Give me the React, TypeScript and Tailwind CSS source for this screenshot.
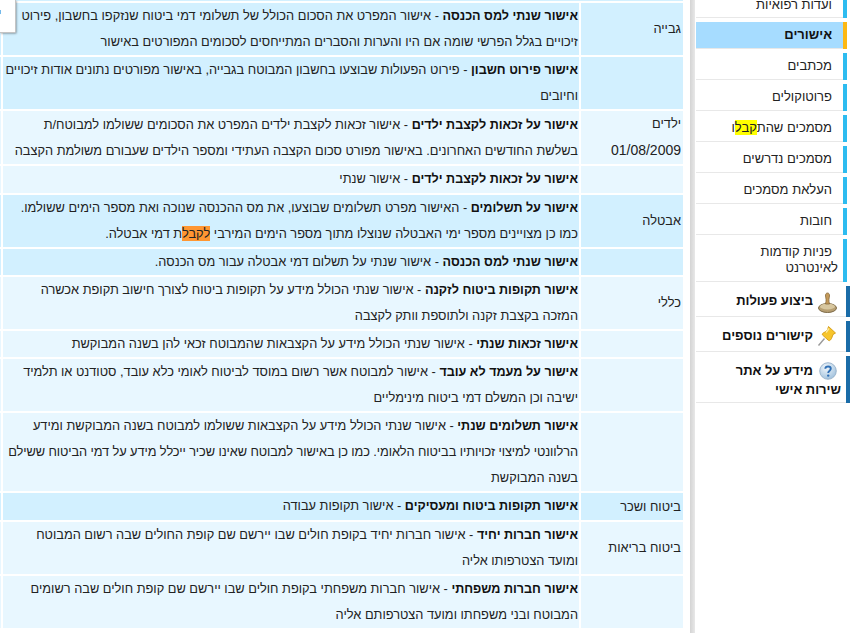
import React from "react";

type Row = { cat?: React.ReactNode; dark: boolean; title: string; lines: React.ReactNode[]; extra?: boolean };

const rows: Row[] = [
  { dark: true, cat: "גבייה", title: "אישור שנתי למס הכנסה", lines: ["אישור המפרט את הסכום הכולל של תשלומי דמי ביטוח שנזקפו בחשבון, פירוט", "זיכויים בגלל הפרשי שומה אם היו והערות והסברים המתייחסים לסכומים המפורטים באישור"] },
  { dark: true, title: "אישור פירוט חשבון", lines: ["פירוט הפעולות שבוצעו בחשבון המבוטח בגבייה, באישור מפורטים נתונים אודות זיכויים", "וחיובים"] },
  { dark: false, cat: <>ילדים<br /><span className="text-[14px]">01/08/2009</span></>, title: "אישור על זכאות לקצבת ילדים", lines: ["אישור זכאות לקצבת ילדים המפרט את הסכומים ששולמו למבוטח/ת", "בשלשת החודשים האחרונים. באישור מפורט סכום הקצבה העתידי ומספר הילדים שעבורם משולמת הקצבה"] },
  { dark: false, extra: true, title: "אישור על זכאות לקצבת ילדים", lines: ["אישור שנתי"] },
  { dark: true, cat: "אבטלה", title: "אישור על תשלומים", lines: ["האישור מפרט תשלומים שבוצעו, את מס ההכנסה שנוכה ואת מספר הימים ששולמו.", <>כמו כן מצויינים מספר ימי האבטלה שנוצלו מתוך מספר הימים המירבי <span className="bg-[#ff9632]">לקבל</span>ת דמי אבטלה.</>] },
  { dark: true, title: "אישור שנתי למס הכנסה", lines: ["אישור שנתי על תשלום דמי אבטלה עבור מס הכנסה."] },
  { dark: false, cat: "כללי", title: "אישור תקופות ביטוח לזקנה", lines: ["אישור שנתי הכולל מידע על תקופות ביטוח לצורך חישוב תקופת אכשרה", "המזכה בקצבת זקנה ולתוספת וותק לקצבה"] },
  { dark: false, title: "אישור זכאות שנתי", lines: ["אישור שנתי הכולל מידע על הקצבאות שהמבוטח זכאי להן בשנה המבוקשת"] },
  { dark: false, title: "אישור על מעמד לא עובד", lines: ["אישור למבוטח אשר רשום במוסד לביטוח לאומי כלא עובד, סטודנט או תלמיד", "ישיבה וכן המשלם דמי ביטוח מינימליים"] },
  { dark: false, title: "אישור תשלומים שנתי", lines: ["אישור שנתי הכולל מידע על הקצבאות ששולמו למבוטח בשנה המבוקשת ומידע", <span className="tracking-[-0.09px]">הרלוונטי למיצוי זכויותיו בביטוח הלאומי. כמו כן באישור למבוטח שאינו שכיר ייכלל מידע על דמי הביטוח ששילם</span>, "בשנה המבוקשת"] },
  { dark: true, extra: true, cat: "ביטוח ושכר", title: "אישור תקופות ביטוח ומעסיקים", lines: ["אישור תקופות עבודה"] },
  { dark: false, cat: "ביטוח בריאות", title: "אישור חברות יחיד", lines: ["אישור חברות יחיד בקופת חולים שבו יירשם שם קופת החולים שבה רשום המבוטח", "ומועד הצטרפותו אליה"] },
  { dark: false, title: "אישור חברות משפחתי", lines: ["אישור חברות משפחתי בקופת חולים שבו יירשם שם קופת חולים שבה רשומים", "המבוטח ובני משפחתו ומועד הצטרפותם אליה"] },
];

function SubItem({ children, active, h = "h-[27px]", mb = "mb-1" }: { children: React.ReactNode; active?: boolean; h?: string; mb?: string }) {
  return (
    <div className={`${h} ${mb} flex w-[151px] shrink-0`}>
      <div className={`flex-1 min-w-0 border-b border-[#e8e8e8] pr-[11px] text-right leading-[26px] ${active ? "bg-[#a6dcff] font-bold text-[#111]" : "bg-white text-[#222]"}`}>
        {children}
      </div>
      <div className={`w-1 ${active ? "bg-[#fdb813]" : "bg-[#2dbcf0]"}`} />
    </div>
  );
}

function MainItem({ icon, children, h = "h-[31px]", mb = "mb-1" }: { icon: React.ReactNode; children: React.ReactNode; h?: string; mb?: string }) {
  return (
    <div className={`${h} ${mb} flex w-[154px] shrink-0`}>
      <div className="relative flex-1 border-b border-[#e8e8e8] pr-[33px] pt-[2px] text-right font-bold leading-[26px] text-[#111]">
        <span className="absolute right-[9px] top-[4px]">{icon}</span>
        {children}
      </div>
      <div className="w-1 bg-[#1a6ca8]" />
    </div>
  );
}

function Stamp() {
  return (
    <svg width="20" height="24" viewBox="0 0 20 24">
      <ellipse cx="10.5" cy="18" rx="9" ry="4.5" fill="#b79f72" stroke="#7d6a47" />
      <ellipse cx="10.5" cy="16.5" rx="7.5" ry="3" fill="#d8c79f" />
      <path d="M8.5 14 C9.5 10 9 9 8.5 6 C8 2 13 2 12.5 6 C12 9 11.5 10 12.5 14 Z" fill="#c49a5a" stroke="#86683a" strokeWidth="0.8" />
    </svg>
  );
}

function Pin() {
  return (
    <svg width="20" height="22" viewBox="0 0 20 22">
      <path d="M1.5 20.5 L7.5 13.5" stroke="#9a9a9a" strokeWidth="1.4" />
      <path d="M11.5 1.5 L18.5 8 L16 9.5 L14.5 13.5 C13 16 12 16 11 15 L5.5 10 C5 9 5.5 8 8 7 L10.5 5 Z" fill="#f7c52c" stroke="#d49a12" strokeWidth="0.9" />
      <path d="M12 3.5 L9 7.5" stroke="#fdeaa0" strokeWidth="1.4" />
    </svg>
  );
}

function Question() {
  return (
    <svg width="18" height="18" viewBox="0 0 18 18" className="mt-[2px]">
      <defs>
        <radialGradient id="qg" cx="40%" cy="30%" r="75%">
          <stop offset="0%" stopColor="#f2f7fb" />
          <stop offset="100%" stopColor="#9dbfdc" />
        </radialGradient>
      </defs>
      <circle cx="9" cy="9" r="8.3" fill="url(#qg)" stroke="#8fa9c4" strokeWidth="0.8" />
      <path d="M6.3 6.8 C6.5 3.8 11.8 3.8 11.8 6.8 C11.8 8.8 9.2 8.6 9.2 11" fill="none" stroke="#2f6fb5" strokeWidth="1.9" />
      <circle cx="9.2" cy="13.6" r="1.2" fill="#2f6fb5" />
    </svg>
  );
}

export default function App() {
  return (
    <div className="relative flex h-[633px] w-[851px] overflow-hidden bg-white text-[13px] text-[#222]" style={{ fontFamily: '"Liberation Sans", Arial, sans-serif' }}>
      <div className="absolute left-0 top-0 z-10 h-[33px] w-[16px] overflow-hidden rounded-br-[2px] border-b border-r border-[#c4c4c4] bg-white shadow-[1px_1px_2px_rgba(0,0,0,0.3)]">
        <span className="absolute -left-[2px] top-[4px]">י</span>
      </div>

      <div className="w-[690px] shrink-0">
        <table dir="ltr" className="-ml-[2px] -mt-[2px] w-[687px] table-fixed border-separate border-spacing-[2px]">
          <colgroup>
            <col className="w-[1px]" />
            <col className="w-[576px]" />
            <col className="w-[102px]" />
          </colgroup>
          <tbody>
            <tr className="h-[1px]">
              <td className="bg-[#d2f0ff] p-0" colSpan={3} />
            </tr>
            {rows.map((r, i) => {
              const bg = r.dark ? "bg-[#d2f0ff]" : "bg-[#e8f7ff]";
              return (
                <tr key={i}>
                  <td className={`${bg} p-0`} />
                  <td dir="rtl" className={`${bg} ${r.extra ? "pb-[1px]" : "pb-0"} overflow-hidden whitespace-nowrap pl-0 pr-[1px] pt-0 text-right align-middle text-[12.8px] leading-[26px]`}>
                    {r.lines.map((l, j) => (
                      <React.Fragment key={j}>
                        {j === 0 && (
                          <>
                            <b className="text-[12.6px] text-[#111]">{r.title}</b> -{" "}
                          </>
                        )}
                        {l}
                        {j < r.lines.length - 1 && <br />}
                      </React.Fragment>
                    ))}
                  </td>
                  <td dir="rtl" className={`${bg} whitespace-nowrap p-0 pr-[2px] text-right align-middle text-[12.8px] leading-[26px]`}>
                    {r.cat}
                  </td>
                </tr>
              );
            })}
          </tbody>
        </table>
      </div>

      <div className="w-[5px] shrink-0 bg-gradient-to-r from-[#d4d4d4] to-[#e8e8e8]" />

      <div dir="ltr" className="ml-[1px] flex w-[155px] shrink-0 flex-col">
        <div className="mb-1 flex h-[18px] w-[151px] shrink-0">
          <div className="flex flex-1 items-end justify-end overflow-hidden border-b border-[#e8e8e8] pr-[11px] leading-[24px]">
            <span dir="rtl">ועדות רפואיות</span>
          </div>
          <div className="w-1 bg-[#2dbcf0]" />
        </div>
        <SubItem active><span dir="rtl">אישורים</span></SubItem>
        <SubItem><span dir="rtl">מכתבים</span></SubItem>
        <SubItem><span dir="rtl">פרוטוקולים</span></SubItem>
        <SubItem><span dir="rtl">מסמכים שהת<span className="bg-[#ffff00]">קבל</span>ו</span></SubItem>
        <SubItem><span dir="rtl">מסמכים נדרשים</span></SubItem>
        <SubItem><span dir="rtl">העלאת מסמכים</span></SubItem>
        <SubItem><span dir="rtl">חובות</span></SubItem>
        <SubItem h="h-[43px]">
          <div dir="rtl" className="-mr-[6px] pt-[5px] text-right leading-[16px] text-[#222]">
            <span className="mr-[6px]">פניות קודמות</span>
            <br />
            לאינטרנט
          </div>
        </SubItem>
        <MainItem icon={<Stamp />}><span dir="rtl">ביצוע פעולות</span></MainItem>
        <MainItem icon={<Pin />}><span dir="rtl">קישורים נוספים</span></MainItem>
        <MainItem h="h-[47px]" icon={<Question />}>
          <div dir="rtl" className="-mr-[28px] mt-[3px] text-right leading-[19px]">
            <span className="mr-[28px]">מידע על אתר</span>
            <br />
            שירות אישי
          </div>
        </MainItem>
      </div>
    </div>
  );
}
